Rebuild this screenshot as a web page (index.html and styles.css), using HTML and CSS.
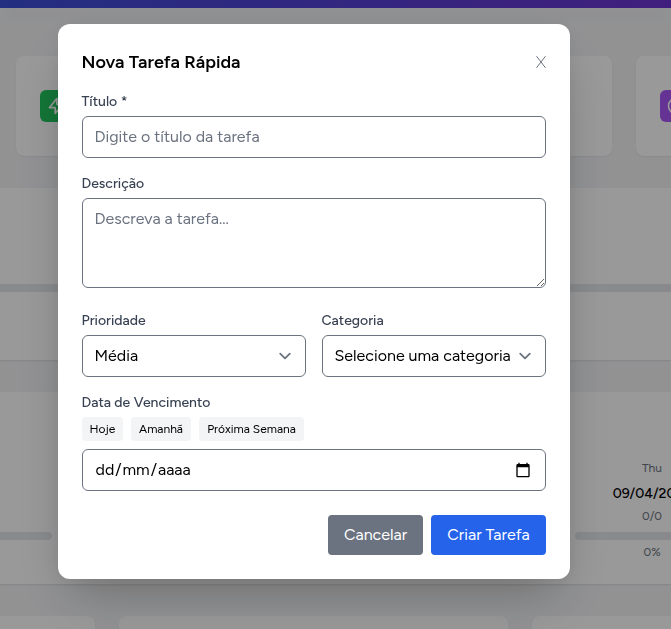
FILE: index.html
```html
<!DOCTYPE html>
<html lang="pt-BR">
<head>
<meta charset="utf-8">
<title>Nova Tarefa Rápida</title>
<link rel="stylesheet" href="styles.css">
</head>
<body>
<div class="page">
  <header class="topbar"></header>
  <section class="stats">
    <div class="card stat"><div class="stat-icon green"><svg viewBox="0 0 24 24"><path d="M13 10V3L4 14h7v7l9-11h-7z"/></svg></div></div>
    <div class="card stat"></div>
    <div class="card stat"><div class="stat-icon purple"><svg viewBox="0 0 24 24"><path d="M12 8v4l3 3m6-3a9 9 0 11-18 0 9 9 0 0118 0z"/></svg></div></div>
  </section>
  <section class="panel overall"><div class="bar"></div></section>
  <section class="panel week">
    <div class="day past"><div class="bar"></div></div>
    <div class="day">
      <span class="small">Thu</span>
      <span class="date">09/04/2026</span>
      <span class="small count">0/0</span>
      <div class="bar"></div>
      <span class="small percent">0%</span>
    </div>
  </section>
  <section class="columns"><div class="card"></div><div class="card"></div><div class="card"></div></section>
</div>
<div class="overlay">
  <form class="modal">
    <div class="modal-head"><h2>Nova Tarefa Rápida</h2><button type="button" class="close" aria-label="Fechar"><svg viewBox="0 0 11 14"><path d="M1.500 1.200 10.500 12.800M10.500 1.200 1.500 12.800"/></svg></button></div>
    <div class="field">
      <label for="t">Título *</label>
      <input class="control" id="t" type="text" placeholder="Digite o título da tarefa">
    </div>
    <div class="field desc">
      <label for="d">Descrição</label>
      <textarea class="control" id="d" placeholder="Descreva a tarefa..."></textarea>
    </div>
    <div class="pair">
      <div class="field">
        <label>Prioridade</label>
        <div class="control select"><span>Média</span><svg class="chevron" viewBox="0 0 20 20"><path d="M6 8l4 4 4-4"/></svg></div>
      </div>
      <div class="field">
        <label>Categoria</label>
        <div class="control select"><span>Selecione uma categoria</span><svg class="chevron" viewBox="0 0 20 20"><path d="M6 8l4 4 4-4"/></svg></div>
      </div>
    </div>
    <div class="field">
      <label>Data de Vencimento</label>
      <div class="chips"><button type="button" class="chip today">Hoje</button><button type="button" class="chip tomorrow">Amanhã</button><button type="button" class="chip next">Próxima Semana</button></div>
      <div class="control datebox"><span class="date-parts"><span>dd</span>/<span>mm</span>/<span>aaaa</span></span><svg class="calendar" viewBox="0 0 24 24"><path d="M20 3h-1V1h-2v2H7V1H5v2H4c-1.1 0-2 .9-2 2v16c0 1.100.9 2 2 2h16c1.100 0 2-.9 2-2V5c0-1.100-.9-2-2-2zm0 18H4V8h16v13z"/></svg></div>
    </div>
    <div class="actions"><button type="button" class="btn cancel">Cancelar</button><button type="button" class="btn create">Criar Tarefa</button></div>
  </form>
</div>
</body>
</html>
```
FILE: styles.css
```css
* { box-sizing: border-box; }
body { margin: 0; height: 629px; overflow: hidden; font-family: Figtree, Lato, "Open Sans", sans-serif; font-size: 16px; line-height: 24px; color: #000; }
button, input, textarea { font: inherit; }
button { border: 0; padding: 0; margin: 0; white-space: nowrap; }
.page { height: 629px; overflow: hidden; background: #f3f4f6; }
.topbar { height: 8px; background: linear-gradient(90deg, #3c4fd8, #6d33d2); box-shadow: 0 10px 15px -3px rgba(0,0,0,.12), 0 4px 6px -4px rgba(0,0,0,.12); }
.card { background: #fff; border-radius: 8px; box-shadow: 0 1px 2px rgba(0,0,0,.06); }
.stats { display: grid; grid-template-columns: repeat(3, 286px); gap: 24px; padding: 48px 16px 32px; }
.stat { height: 100px; padding: 34px 24px; }
.stat-icon { width: 32px; height: 32px; border-radius: 6px; display: flex; align-items: center; justify-content: center; }
.stat-icon svg { width: 20px; height: 20px; fill: none; stroke: #fff; stroke-width: 2; stroke-linecap: round; stroke-linejoin: round; }
.green { background: #22c55e; }
.purple { background: #a855f7; }
.panel { background: #fff; box-shadow: 0 1px 2px rgba(0,0,0,.1); }
.bar { height: 8px; background: #e5e7eb; border-radius: 4px; }
.overall { height: 172px; padding-top: 96px; margin-bottom: 32px; }
.overall .bar { border-radius: 0; }
.week { height: 192px; margin: 0 -100px 32px 0; display: flex; gap: 523px; }
.past { width: 52px; flex: none; padding-top: 140px; }
.past .bar { border-radius: 0 4px 4px 0; }
.day:not(.past) { width: 154px; flex: none; padding-top: 68px; display: flex; flex-direction: column; align-items: center; }
.day .bar { width: 100%; }
.small { font-size: 12px; line-height: 16px; color: #6b7280; }
.date { font-size: 14px; font-weight: 500; line-height: 20px; margin: 8px 0 4px; }
.count { margin-bottom: 8px; }
.percent { margin-top: 4px; }
.columns { display: grid; grid-template-columns: 389px 389px 389px; gap: 24px; margin-left: -294px; }
.columns .card { height: 60px; }
.overlay { position: fixed; inset: 0; background: rgba(0,0,0,.4); padding: 24px 0 0 57.5px; }
.modal { width: 512px; height: 555px; padding: 24px; border-radius: 12px; background: #fff; box-shadow: 0 25px 50px -12px rgba(0,0,0,.25), 0 2px 18px rgba(0,0,0,.06); }
.modal-head { height: 28px; margin-bottom: 16px; display: flex; justify-content: space-between; align-items: center; }
h2 { margin: 0; font-size: 18px; font-weight: 600; line-height: 28px; }
.close { width: 11px; height: 14px; background: none; display: flex; }
.close svg { width: 11px; height: 14px; fill: none; stroke: #6b7280; stroke-width: 1; }
.field { margin-bottom: 16px; }
label { display: block; font-size: 14px; font-weight: 500; line-height: 20px; margin-bottom: 4px; color: #374151; white-space: nowrap; }
.control { display: block; width: 100%; height: 42px; padding: 8px 12px; border: 1px solid #6b7280; border-radius: 6px; background: #fff; color: #000; }
input.control { padding: 7px 12px 9px; }
.control::placeholder { color: #6b7280; opacity: 1; }
textarea.control { height: 90px; resize: vertical; }
.desc { margin-bottom: 23px; }
.pair { display: grid; grid-template-columns: 224px 224px; gap: 16px; }
.select, .datebox { display: flex; align-items: center; justify-content: space-between; padding-right: 8px; white-space: nowrap; }
.chevron { width: 24px; height: 24px; fill: none; stroke: #6b7280; stroke-width: 1.5; stroke-linecap: round; stroke-linejoin: round; flex: none; }
.datebox { padding-right: 14px; }
.date-parts span { padding: 0 1px; }
.calendar { width: 16px; height: 16px; }
.chips { display: flex; gap: 8px; margin-bottom: 8px; }
.chip { height: 24px; padding-left: 1px; border-radius: 4px; background: #f3f4f6; font-size: 12px; line-height: 16px; color: #000; }
.today { width: 41px; }
.tomorrow { width: 60px; }
.next { width: 105px; }
.actions { display: flex; gap: 8px; justify-content: flex-end; margin-top: 24px; }
.btn { height: 40px; padding-left: 1px; border-radius: 4px; color: #fff; }
.cancel { width: 95px; background: #6b7280; }
.create { width: 115px; background: #2563eb; }
```
